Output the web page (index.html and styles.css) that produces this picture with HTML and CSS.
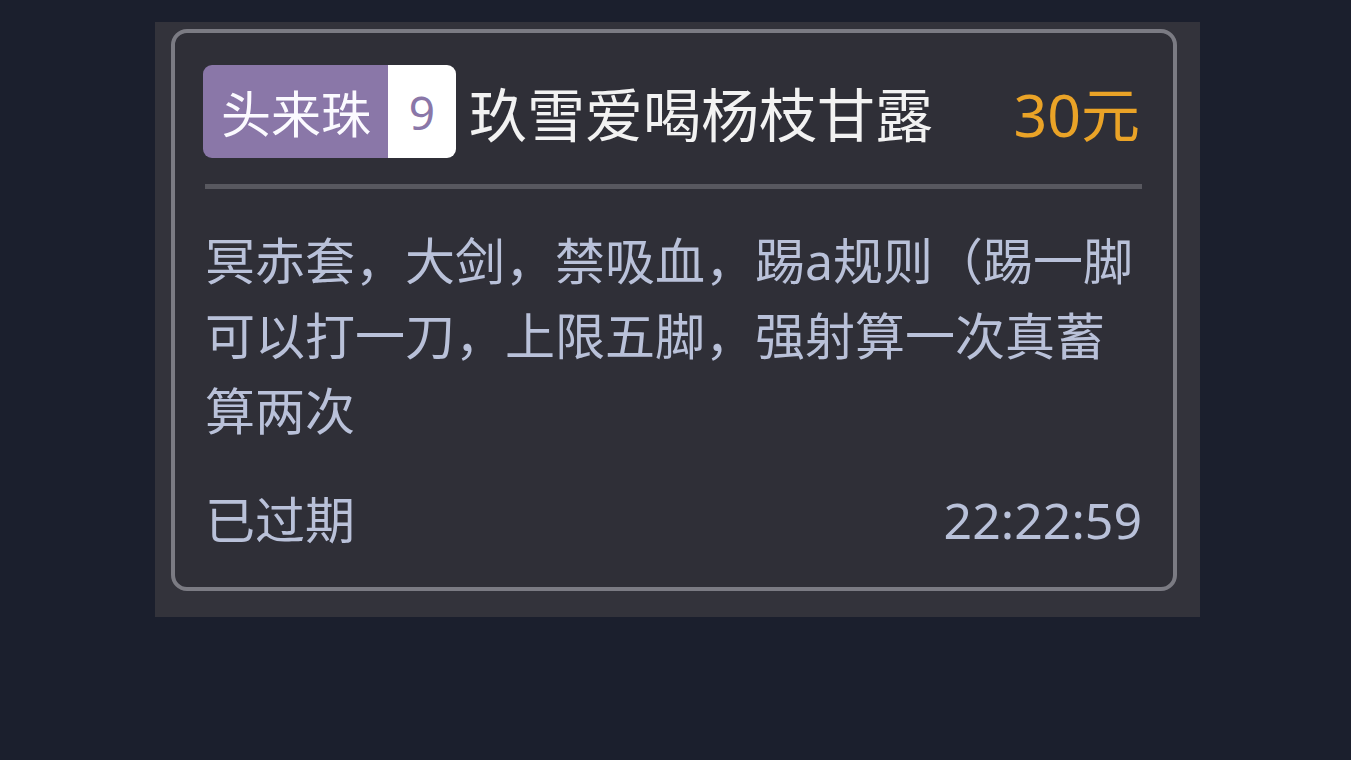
FILE: index.html
```html
<!DOCTYPE html>
<html lang="zh-CN">
<head>
<meta charset="utf-8">
<link rel="stylesheet" href="styles.css">
</head>
<body>
<div class="panel">
  <div class="card">
    <div class="head">
      <div class="badge"><span class="badge-name">头来珠</span><span class="badge-num">9</span></div>
      <div class="title">玖雪爱喝杨枝甘露</div>
      <div class="price">30元</div>
    </div>
    <div class="divider"></div>
    <div class="desc">冥赤套，大剑，禁吸血，踢a规则（踢一脚可以打一刀，上限五脚，强射算一次真蓄算两次</div>
    <div class="foot">
      <span class="status">已过期</span>
      <span class="time">22:22:59</span>
    </div>
  </div>
</div>
</body>
</html>
```
FILE: styles.css
```css
html, body {
  margin: 0;
  padding: 0;
}
body {
  width: 1351px;
  height: 760px;
  background: #1b1f2d;
  font-family: "Noto Sans", "Noto Sans CJK SC", sans-serif;
  overflow: hidden;
}
.panel {
  box-sizing: border-box;
  margin: 22px 0 0 155px;
  width: 1045px;
  height: 595px;
  padding: 7px 23px 26px 16px;
  background: #33333b;
}
.card {
  box-sizing: border-box;
  height: 562px;
  border: 4px solid #7b7b83;
  border-radius: 16px;
  background: #2f2f37;
  padding: 32px 31px 0 30px;
}
.head {
  display: flex;
  align-items: center;
  height: 93px;
}
.badge {
  display: flex;
  height: 93px;
  margin-left: -2px;
  border-radius: 9px;
  overflow: hidden;
}
.badge-name {
  display: flex;
  align-items: center;
  background: #8a77a8;
  color: #fbfaff;
  font-size: 50px;
  padding: 0 17px 0 18px;
}
.badge-num {
  display: flex;
  align-items: center;
  justify-content: center;
  width: 68px;
  background: #ffffff;
  color: #8a77a8;
  font-size: 46px;
}
.title {
  flex: 1;
  margin-left: 13px;
  margin-top: 6px;
  color: #f2f2f2;
  font-size: 58px;
  line-height: 1;
}
.price {
  margin-top: 6px;
  margin-right: 2px;
  color: #eaa327;
  font-size: 59px;
  line-height: 1;
}
.divider {
  height: 5px;
  margin-top: 26px;
  background: #58585f;
}
.desc {
  margin-top: 35px;
  color: #b9c1d9;
  font-size: 50px;
  line-height: 75px;
}
.foot {
  display: flex;
  justify-content: space-between;
  margin-top: 34px;
  color: #b9c1d9;
  font-size: 50px;
  line-height: 75px;
}
```
